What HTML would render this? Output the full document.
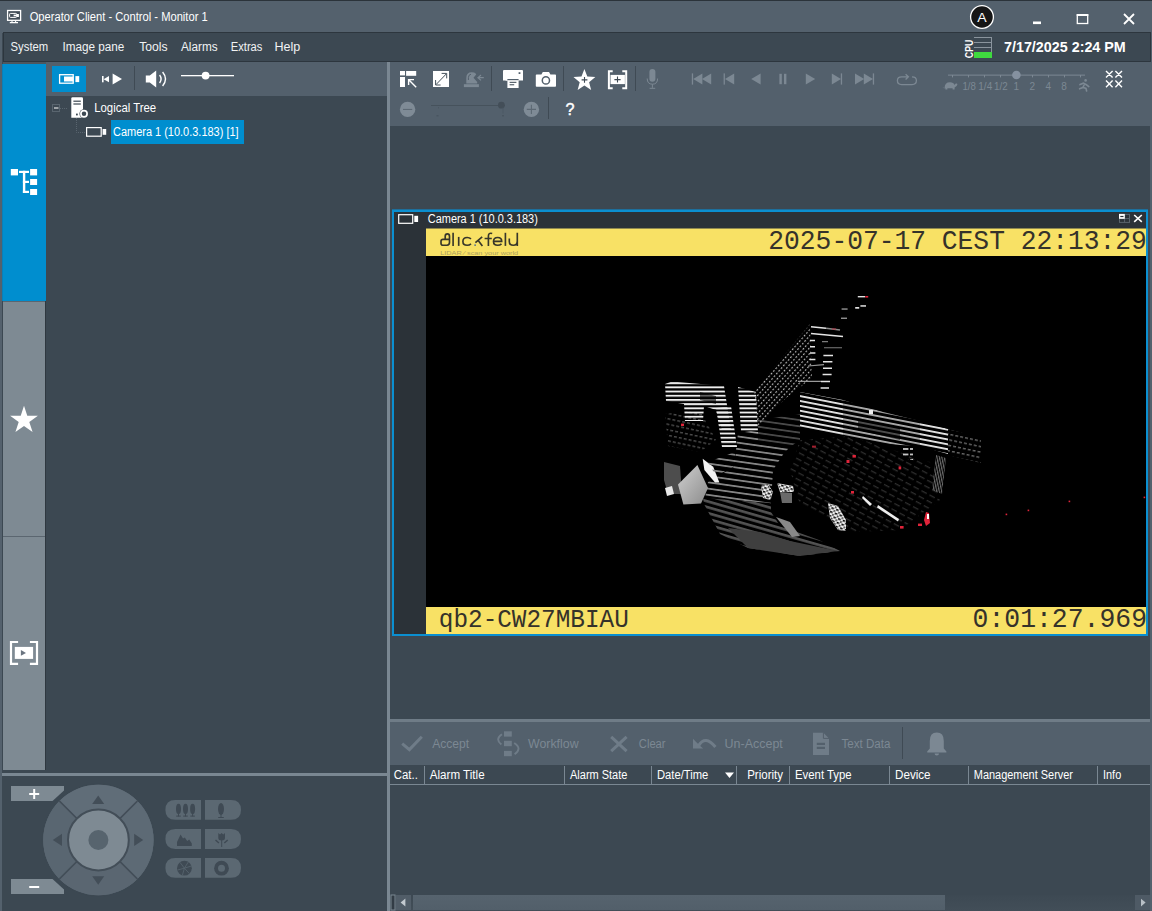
<!DOCTYPE html>
<html>
<head>
<meta charset="utf-8">
<title>Operator Client - Control - Monitor 1</title>
<style>
*{box-sizing:border-box;margin:0;padding:0}
html,body{width:1152px;height:911px;overflow:hidden;background:#3c4852;font-family:"Liberation Sans",sans-serif;}
.a{position:absolute}
#titlebar{left:0;top:0;width:1152px;height:33px;background:#54616d;border-top:1px solid #2b333a}
#edgeL{left:0;top:33px;width:2px;height:878px;background:#54616d}
#edgeR{left:1150px;top:33px;width:2px;height:878px;background:#54616d}
#menubar{left:3px;top:32px;width:1148px;height:30px;background:#3c4852;border:1px solid #2d363e}
#sidetop{left:3px;top:62px;width:43px;height:2px;background:#4d575f}
#side1{left:2px;top:64px;width:44px;height:237px;background:#008ecf;border-left:1px solid #0a7fb8}
#side2{left:3px;top:301px;width:43px;height:235px;background:#7e8a93;border-top:1px solid #5b6670}
#side3{left:3px;top:536px;width:43px;height:234px;background:#7e8a93;border-top:1px solid #5b6670}
#sideR{left:45px;top:301px;width:1px;height:469px;background:#2f3840}
#ltool{left:46px;top:62px;width:341px;height:34px;background:#53606c}
#rtool{left:390px;top:62px;width:760px;height:64px;background:#53606c}
#vsplit{left:387px;top:62px;width:3px;height:849px;background:#7a8792}
#hsplitL{left:2px;top:773px;width:385px;height:3px;background:#7a8792}
#hsplitR{left:390px;top:719px;width:760px;height:3px;background:#6f7c87}
#atool{left:390px;top:722px;width:760px;height:43px;background:#53606c}
#selbtn{left:52px;top:66px;width:34px;height:26px;background:#008ecf}
#treesel{left:111px;top:120px;width:133px;height:24px;background:#008ecf}
#pane{left:392px;top:210px;width:756px;height:426px;background:#2b3238;border:2px solid #0b8fd0}
#video{left:426px;top:229px;width:720px;height:405px;background:#000;overflow:hidden}
#ytop{left:0;top:0;width:720px;height:27px;background:#f8e165}
#ybot{left:0;top:378px;width:720px;height:27px;background:#f8e165}
#thead{left:390px;top:765px;width:760px;height:20px;background:#3c4852;border-bottom:1px solid #7a8792}
.col{position:absolute;top:766px;width:1px;height:18px;background:#7a8792}
#sbar{left:390px;top:895px;width:760px;height:16px;background:linear-gradient(#3d4953,#424e58)}
#sthumb{left:413px;top:895px;width:532px;height:15px;background:linear-gradient(#56636e,#525f6a)}
#sleft{left:396px;top:895px;width:15px;height:15px;background:#515d68}
#sright{left:1135px;top:895px;width:15px;height:15px;background:#4e5a65}
svg text{font-family:"Liberation Sans",sans-serif}
.mono{font-family:"Liberation Mono",monospace;font-size:27px;fill:#35322a}
</style>
</head>
<body>
<div class="a" id="titlebar"></div>
<div class="a" id="edgeL"></div>
<div class="a" id="edgeR"></div>
<div class="a" id="menubar"></div>
<div class="a" id="sidetop"></div>
<div class="a" id="side1"></div>
<div class="a" id="side2"></div>
<div class="a" id="side3"></div>
<div class="a" id="sideR"></div>
<div class="a" id="ltool"></div>
<div class="a" id="rtool"></div>
<div class="a" id="vsplit"></div>
<div class="a" id="hsplitL"></div>
<div class="a" id="hsplitR"></div>
<div class="a" id="atool"></div>
<div class="a" id="selbtn"></div>
<div class="a" id="treesel"></div>
<div class="a" id="thead"></div>
<div class="col" style="left:424px"></div>
<div class="col" style="left:564px"></div>
<div class="col" style="left:651px"></div>
<div class="col" style="left:736px"></div>
<div class="col" style="left:789px"></div>
<div class="col" style="left:889px"></div>
<div class="col" style="left:968px"></div>
<div class="col" style="left:1097px"></div>
<div class="a" id="sbar"></div>
<div class="a" id="sthumb"></div>
<div class="a" id="sleft"></div>
<div class="a" id="sright"></div>

<div class="a" id="pane"></div>
<div class="a" style="left:392px;top:209px;width:756px;height:1px;background:#1d6f9c"></div>
<div class="a" style="left:426px;top:228px;width:720px;height:1px;background:#8f884f"></div>
<div class="a" id="video">
<div class="a" id="ytop"></div>
<div class="a" id="ybot"></div>
<!--VIDEO-SVG-->
<svg class="a" style="left:0;top:0" width="720" height="405" viewBox="426 229 720 405">
<defs>
<pattern id="sw" width="6" height="4.2" patternUnits="userSpaceOnUse"><rect width="6" height="1.9" fill="#eeeeee"/></pattern>
<pattern id="sw2" width="6" height="4.8" patternUnits="userSpaceOnUse" patternTransform="rotate(11)"><rect width="6" height="1.8" fill="#ececec"/></pattern>
<pattern id="sd" width="3.6" height="3.9" patternUnits="userSpaceOnUse" patternTransform="rotate(-49)"><rect width="1.9" height="1.15" fill="#b4b4b4"/></pattern>
<pattern id="sdash" width="7" height="5.4" patternUnits="userSpaceOnUse"><rect width="5.4" height="1.6" fill="#dcdcdc"/></pattern>
<pattern id="sdim" width="5" height="5.4" patternUnits="userSpaceOnUse" patternTransform="rotate(12)"><rect width="3" height="1.4" fill="#8a8a8a"/></pattern>
<pattern id="sfl" width="8" height="6.2" patternUnits="userSpaceOnUse" patternTransform="rotate(8)"><rect width="8" height="1.8" fill="#858585"/></pattern>
<pattern id="sfl2" width="8" height="5.6" patternUnits="userSpaceOnUse" patternTransform="rotate(16)"><rect width="8" height="2.6" fill="#535353"/></pattern>
<pattern id="sc" width="9" height="6" patternUnits="userSpaceOnUse" patternTransform="rotate(28)"><rect width="6" height="1.3" fill="#5c5c5c"/></pattern>
<pattern id="sv" width="2.4" height="3" patternUnits="userSpaceOnUse" patternTransform="rotate(-12)"><rect width="1.2" height="3" fill="#6f6f6f"/></pattern>
<pattern id="spk" width="5" height="4" patternUnits="userSpaceOnUse" patternTransform="rotate(20)"><rect width="2.6" height="1.6" fill="#000"/><rect x="3" y="2.2" width="1.6" height="1.4" fill="#000"/></pattern>
<linearGradient id="gb" x1="0" y1="0" x2="1" y2="1"><stop offset="0" stop-color="#d0d0d0"/><stop offset="1" stop-color="#8c8c8c"/></linearGradient>
</defs>
<!-- logo -->
<g fill="none" stroke="#38372a" stroke-width="1.65" stroke-linecap="butt">
<path d="M449.4 239.4H443Q441 239.4 441 241.4V243.2Q441 245.2 443 245.2H447Q449.5 245.2 449.5 242.6V236.2Q449.5 233.8 447.4 233.8Q445.2 233.8 445.2 236.2V239.4"/>
<path d="M453.1 232.8V245.9"/>
<path d="M458.7 236.9V245.9"/>
<path d="M471 238.9Q469.4 237.5 467.2 237.5Q462.9 237.5 462.9 241.4Q462.9 245.2 467.2 245.2Q469.4 245.2 471 243.8"/>
<path d="M482.2 236.9L475.4 242.6M478.2 240.4L482.4 245.9"/>
<path d="M492.2 233.5Q488.4 232.5 488.4 236V245.9M484.6 238.5H491.8"/>
<path d="M493.8 241.3H501.7Q501.7 237.5 497.7 237.5Q493.5 237.5 493.5 241.4Q493.5 245.2 497.7 245.2Q500 245.2 501.5 243.8"/>
<path d="M505.4 232.8V245.9"/>
<path d="M509.3 238.6V241.4Q509.3 245.2 513.3 245.2Q517.2 245.2 517.2 241.4M517.3 232.8V245.9"/>
</g>
<rect x="474.4" y="244.4" width="1.4" height="1.5" fill="#3a5f9a"/>
<text x="440.2" y="254.9" font-size="4.6" fill="#ab9f5e" textLength="78" lengthAdjust="spacingAndGlyphs" font-family="Liberation Sans">LIDAR  ⁄ scan your world</text>
<!-- overlay text -->
<text class="mono" x="768.3" y="248.9" textLength="378.6" lengthAdjust="spacingAndGlyphs">2025-07-17 CEST 22:13:29</text>
<text class="mono" style="font-size:25px" x="438.8" y="626.7" textLength="190" lengthAdjust="spacingAndGlyphs">qb2-CW27MBIAU</text>
<text class="mono" x="972.6" y="626.8" textLength="174.4" lengthAdjust="spacingAndGlyphs">0:01:27.969</text>
<!--CLOUD-->
<g id="cloud">
<!-- floor -->
<polygon points="758,420 800,414 800,440 790,447 758,443" fill="url(#sfl)" opacity="0.55"/>
<polygon points="738,433 758,430 758,443 790,447 784,453 773,470 771,503 705,498 708,482 734,467" fill="url(#sfl)"/>
<polygon points="703,498 771,503 771,512 780,526 819,540 840,551 800,556 748,548 720,534 704,504" fill="url(#sfl2)"/>
<polygon points="728,528 760,532 790,541 838,551 800,556 748,548" fill="#3f3f3f"/>
<polygon points="776,517 790,522 800,536 792,537" fill="#888"/>
<!-- dim clutter left -->
<polygon points="665,414 700,410 716,440 700,452 668,446" fill="url(#sdim)" opacity="0.55"/>
<polygon points="800,440 850,436 930,462 940,500 900,530 850,532 800,505 790,470" fill="url(#sc)" opacity="0.5"/>
<!-- left wall -->
<polygon points="665,384 672,381.5 724,386 727,405 731,430 722,430 716,410 704,406 703,421 685,421 684,404 666,401" fill="url(#sw)"/>
<polygon points="716,408 731,406 737,447 722,447" fill="url(#sw)"/>
<polygon points="700,392 716,396 716,404 700,400" fill="#000" opacity="0.6"/>
<!-- B -->
<polygon points="738,387 756,392 758,433 741,431" fill="url(#sw)"/>
<!-- diagonal wall -->
<polygon points="754,391 810,324 812,378 786,398 762,422 758,428" fill="url(#sd)"/>
<!-- tower -->
<g stroke="#e4e4e4" stroke-width="1.5" fill="none">
<path d="M811 326.8L826 328.2"/><path d="M826 328.2L840 330" stroke="#8a8a8a"/>
<path d="M811 333.4L843 336.6"/>
<path d="M810 340.6H815M810 346.8H815M810 353H815.4M810 359.4H815.4"/>
<path d="M823.4 355.4H833M823 361.8H832.4M823 368.2H832M822.6 374.6H831.6M821 381.6H830M820.6 388H829"/>
</g>
<g stroke="#9a9a9a" stroke-width="1.1" fill="none">
<path d="M822 341.6H828M824 347.8H832M826 347.8H842" opacity="0.8"/>
<path d="M808 366L824 364.6M798 381.4L821 381.4"/>
</g>
<g fill="#e0e0e0">
<rect x="841.6" y="308.4" width="6" height="1.3" opacity="0.7"/><rect x="841" y="317.6" width="6" height="1.3" opacity="0.7"/>
<rect x="857.8" y="296" width="7.2" height="1.4"/><rect x="855.2" y="307" width="4" height="1.7"/><rect x="860.4" y="305.2" width="5.6" height="1.5"/>
</g>
<rect x="865.2" y="296" width="3" height="1.6" fill="#e0243a"/>
<rect x="832" y="328.4" width="4" height="1.2" fill="#b03040" opacity="0.8"/>
<!-- right wall -->
<polygon points="800,392 843,400 843,437 826,432 800,428" fill="url(#sw2)"/>
<polygon points="843,400 883,412 920,421 920,446 900,445 878,443 843,437" fill="url(#sw2)" opacity="0.75"/>
<polygon points="858,418 900,428 900,440 858,430" fill="#000" opacity="0.55"/>
<polygon points="920,421 948,429 948,454 920,446" fill="url(#sw2)"/>
<polygon points="948,429 981,438 981,463 948,455" fill="url(#sdim)" opacity="0.75"/>
<polygon points="902,445 913,447 913,460 902,458" fill="url(#sdash)"/>
<polygon points="936,455 946,458 942,494 932,490" fill="url(#sv)"/>
<!-- blobs -->
<polygon points="664,462 680,466 682,494 668,494 664,480" fill="#4d4d4d"/>
<polygon points="665,488 672,486 674,494 667,496" fill="#e8e8e8"/>
<polygon points="678,484.5 697.4,465 708,488 701,503.6 683.4,504.5" fill="url(#gb)"/>
<polygon points="702.7,458.8 713.2,466.7 719.4,482.5 715,482.5 704.4,470" fill="#f4f4f4"/>
<polygon points="708,462 735,452 735,466 716,476" fill="url(#sfl)"/>
<!-- white clusters -->
<g fill="#ededed">
<polygon points="761,486 768,484 773,492 770,500 763,498"/>
<polygon points="777,483 793,486 794,492 780,492"/>
<polygon points="828,503 838,506 846,520 846,531 838,530 830,518"/>
<polygon points="863,496 872,504 870,506 862,498"/>
<polygon points="878,505 899,519 898,521.5 877,507.5"/>
<rect x="869" y="410" width="4" height="4"/>
</g>
<g fill="url(#spk)">
<polygon points="761,486 768,484 773,492 770,500 763,498"/>
<polygon points="777,483 793,486 794,492 780,492"/>
<polygon points="828,503 838,506 846,520 846,531 838,530 830,518"/>
</g>
<polygon points="780,492 792,493 792,503 782,503" fill="#6a6a6a"/>
<!-- red -->
<g fill="#e0243a">
<rect x="846.5" y="460" width="3" height="3"/><rect x="852.5" y="455" width="3.4" height="2.6"/>
<rect x="898.6" y="466.4" width="2.6" height="3"/><rect x="851" y="491" width="3" height="2.6"/>
<polygon points="926,512 929,513 930,523 926,526 924,520"/>
<rect x="900" y="526" width="3.6" height="2.6"/><rect x="918" y="523.6" width="4" height="2.4"/>
<rect x="681" y="423.6" width="3" height="2.4"/><rect x="812" y="445.6" width="4" height="2" opacity="0.7"/>
<rect x="1005.6" y="513.6" width="1.6" height="1.6"/><rect x="1027.6" y="509.6" width="1.6" height="1.6"/><rect x="1068.6" y="500.6" width="1.6" height="1.6"/><rect x="1143.6" y="496.6" width="1.6" height="1.6"/>
</g>
<rect x="927" y="514" width="2" height="5" fill="#fff"/>
</g>

</svg>

</div>

<svg class="a" id="ov" style="left:0;top:0" width="1152" height="911" viewBox="0 0 1152 911">
<!--CHROME-->
<!-- title icon -->
<rect x="7.6" y="10.5" width="13" height="9.8" fill="#414c56" stroke="#fff" stroke-width="1.3"/>
<path d="M9.8 22.6H18M12 20.8v1.6M15.6 20.8v1.6" stroke="#fff" stroke-width="1.1" fill="none"/>
<rect x="9.6" y="13.4" width="7" height="4" rx="0.8" fill="none" stroke="#fff" stroke-width="1"/>
<rect x="13.6" y="14.6" width="3.4" height="1.7" fill="#fff"/>
<rect x="17" y="14" width="1.9" height="3" fill="#fff"/>
<text x="29.7" y="21.3" font-size="12.5" fill="#fff" textLength="178" lengthAdjust="spacingAndGlyphs">Operator Client - Control - Monitor 1</text>
<!-- user circle -->
<circle cx="982" cy="17" r="11.4" fill="#161616" stroke="#fff" stroke-width="1.3"/>
<text x="977.3" y="21.6" font-size="13" fill="#fff" textLength="9.4" lengthAdjust="spacingAndGlyphs">A</text>
<!-- window buttons -->
<rect x="1033" y="21.5" width="8" height="2.6" fill="#fff"/>
<rect x="1077.3" y="14.9" width="10.4" height="8.6" fill="none" stroke="#fff" stroke-width="1.3"/>
<rect x="1076.7" y="14" width="11.6" height="2" fill="#fff"/>
<path d="M1124 14L1134 24M1134 14L1124 24" stroke="#fff" stroke-width="1.8" fill="none"/>
<!-- menu -->
<g font-size="12.5" fill="#f1f3f4">
<text x="10.6" y="51.2" textLength="37.6" lengthAdjust="spacingAndGlyphs">System</text>
<text x="62.4" y="51.2" textLength="62" lengthAdjust="spacingAndGlyphs">Image pane</text>
<text x="139.2" y="51.2" textLength="28.4" lengthAdjust="spacingAndGlyphs">Tools</text>
<text x="181" y="51.2" textLength="36.6" lengthAdjust="spacingAndGlyphs">Alarms</text>
<text x="230.8" y="51.2" textLength="31.6" lengthAdjust="spacingAndGlyphs">Extras</text>
<text x="274.4" y="51.2" textLength="25.8" lengthAdjust="spacingAndGlyphs">Help</text>
</g>
<!-- CPU -->
<text transform="translate(972.6,58.2) rotate(-90)" font-size="10.5" font-weight="bold" fill="#fff" textLength="18.6" lengthAdjust="spacingAndGlyphs">CPU</text>
<g stroke="#8a949d" stroke-width="1" shape-rendering="crispEdges">
<path d="M974 37.5H992M974 42.5H992M974 47.5H992M974 52.5H992M991.5 37V58"/>
</g>
<rect x="974" y="52" width="18" height="6" fill="#3fd93f" shape-rendering="crispEdges"/>
<text x="1004" y="52" font-size="14" font-weight="bold" fill="#fff" textLength="121.8" lengthAdjust="spacingAndGlyphs">7/17/2025 2:24 PM</text>
<!-- sidebar: tree icon -->
<g fill="#fff">
<rect x="10.8" y="169" width="7.2" height="6.4"/>
<rect x="30.1" y="169" width="7" height="6.4"/>
<rect x="30.1" y="179" width="7" height="6"/>
<rect x="30.1" y="189" width="7" height="6"/>
<rect x="19" y="170.8" width="10" height="2.2"/>
<rect x="22.9" y="170.8" width="2.4" height="22.2"/>
<rect x="22.9" y="180.8" width="6.1" height="2.2"/>
<rect x="22.9" y="190.8" width="6.1" height="2.2"/>
</g>
<!-- sidebar: star -->
<path d="M24.00 405.70L27.28 415.79L37.89 415.79L29.30 422.02L32.58 432.11L24.00 425.88L15.42 432.11L18.70 422.02L10.11 415.79L20.72 415.79Z" fill="#fff"/>
<!-- sidebar: bracket play -->
<g fill="none" stroke="#fff" stroke-width="2.2">
<path d="M18.1 642H11V663.9H18.1M29.9 642H37V663.9H29.9"/>
</g>
<rect x="14.8" y="646.9" width="18.3" height="12" fill="#fff"/>
<path d="M20.9 650L26 652.9L20.9 655.8Z" fill="#6b7580"/>
<!-- left toolbar -->
<rect x="59.6" y="74.7" width="13.6" height="8.5" fill="none" stroke="#fff" stroke-width="1.3"/>
<rect x="64" y="76.5" width="9.5" height="5" fill="#fff"/>
<rect x="75.4" y="76.1" width="3.8" height="6" fill="#fff"/>
<g fill="#fff">
<rect x="102" y="76" width="1.6" height="6.3"/>
<path d="M109 76V82.3L103.6 79.15Z"/>
<path d="M112.6 73.6L122 79L112.6 84.4Z"/>
</g>
<rect x="134" y="66" width="1" height="24" fill="#3f4a54"/>
<path d="M145.8 75.6H149.8L156.2 70.4V87.6L149.8 82.6H145.8Z" fill="#fff"/>
<path d="M159.6 75Q162.6 79 159.6 83M162.6 72Q168.4 79 162.6 86" fill="none" stroke="#fff" stroke-width="1.4"/>
<rect x="181" y="75" width="53" height="1.3" fill="#fff"/>
<circle cx="205.6" cy="75.6" r="3.9" fill="#fff"/>
<!-- tree -->
<rect x="52.5" y="104.5" width="7" height="7" fill="none" stroke="#59656f" stroke-width="1"/>
<rect x="54" y="107.5" width="4.5" height="1" fill="#fff"/>
<path d="M60 108.5H68" stroke="#59656f" stroke-width="1" stroke-dasharray="1 1"/>
<path d="M76.5 118V132.5H85" stroke="#59656f" stroke-width="1" stroke-dasharray="1 1" fill="none"/>
<!-- server icon -->
<path d="M72.5 97.3H81.8Q83 97.3 83 98.5V117.7H71.3V98.5Q71.3 97.3 72.5 97.3Z" fill="#fff"/>
<rect x="73.4" y="100.6" width="7.4" height="1.2" fill="#3c4852"/>
<rect x="73.4" y="103.4" width="7.4" height="1.2" fill="#3c4852"/>
<rect x="76" y="113.6" width="1.8" height="1.8" fill="#3c4852"/>
<circle cx="84" cy="113.8" r="4.6" fill="#3c4852"/>
<circle cx="84" cy="113.8" r="3.1" fill="none" stroke="#fff" stroke-width="1.7"/>
<text x="94.2" y="112" font-size="12.5" fill="#fff" textLength="62" lengthAdjust="spacingAndGlyphs">Logical Tree</text>
<rect x="86.6" y="127.6" width="14.6" height="8.6" fill="none" stroke="#fff" stroke-width="1.2"/>
<rect x="102.6" y="129" width="3.6" height="5.8" fill="#fff"/>
<text x="113" y="136" font-size="12.5" fill="#fff" textLength="125.6" lengthAdjust="spacingAndGlyphs">Camera 1 (10.0.3.183) [1]</text>

<!--TOOLBAR-->
<!-- icon1 layout+arrow -->
<g fill="#fff">
<rect x="400" y="71" width="5" height="4.4"/>
<rect x="400" y="77" width="5" height="10"/>
<rect x="406.1" y="71" width="10.1" height="4.8"/>
</g>
<path d="M416.2 87.2L409 80M408.6 85V79.6H414" fill="none" stroke="#fff" stroke-width="1.4"/>
<!-- icon2 expand -->
<rect x="433" y="71" width="16" height="16" fill="#fff" shape-rendering="crispEdges"/>
<path d="M436 84.6L446.4 73.8M435.6 80V85H440.6M441.6 73.4H446.7V78.4" fill="none" stroke="#46525c" stroke-width="1"/>
<!-- icon3 alarm disabled -->
<g fill="#7c8893">
<path d="M466.3 83.5V78Q466.3 72.2 471.8 72.2Q477.2 72.2 477.2 78V83.5Z"/>
<rect x="463.9" y="84.2" width="15" height="2.9"/>
</g>
<path d="M478.2 74.2L475.2 77.7L478.2 81.2" fill="none" stroke="#53606c" stroke-width="2.6"/>
<path d="M483.8 77.7H478.2M481 75L478 77.7L481 80.4" fill="none" stroke="#7c8893" stroke-width="1.2"/>
<path d="M468.4 80V77.6Q468.4 74.6 471 74.2" fill="none" stroke="#53606c" stroke-width="1"/>
<rect x="491" y="66" width="1" height="25" fill="#3f4a54"/>
<!-- printer -->
<g fill="#fff">
<path d="M504 70H522Q523 70 523 71V80.6H503V71Q503 70 504 70Z"/>
<rect x="507.4" y="78.6" width="11.2" height="9.4"/>
</g>
<rect x="518.6" y="72.2" width="1.8" height="1.8" fill="#53606c"/>
<rect x="505.6" y="78.6" width="1.8" height="2" fill="#fff"/>
<rect x="509.6" y="81.8" width="6.8" height="1.1" fill="#4a5660"/>
<rect x="509.6" y="84.2" width="4.6" height="1.1" fill="#4a5660"/>
<rect x="507.4" y="79" width="11.2" height="1.2" fill="#53606c"/>
<!-- camera -->
<path d="M536.6 74.4H541.4L542.8 72H549L550.4 74.4H555.2Q556 74.4 556 75.2V86Q556 86.8 555.2 86.8H536.6Q535.8 86.8 535.8 86V75.2Q535.8 74.4 536.6 74.4Z" fill="#fff"/>
<circle cx="545.9" cy="80.4" r="3.6" fill="none" stroke="#53606c" stroke-width="1.5"/>
<rect x="563" y="66" width="1" height="25" fill="#3f4a54"/>
<!-- star + -->
<path d="M584.40 69.10L587.31 76.60L595.34 77.05L589.10 82.13L591.16 89.90L584.40 85.54L577.64 89.90L579.70 82.13L573.46 77.05L581.49 76.60Z" fill="#fff"/>
<path d="M581.6 79.9H587.4M584.5 77V82.8" stroke="#3f4a54" stroke-width="1.1" fill="none"/>
<!-- bracket + -->
<path d="M612.7 71.2H608.9V88.2H612.7M622.3 71.2H626.2V88.2H622.3" fill="none" stroke="#fff" stroke-width="2"/>
<rect x="610.5" y="74.9" width="14.4" height="9.2" fill="#fff"/>
<path d="M614.4 79.6H620.6M617.5 76.6V82.6" stroke="#3f4a54" stroke-width="1.1" fill="none"/>
<rect x="635" y="66" width="1" height="25" fill="#3f4a54"/>
<!-- mic disabled -->
<g fill="#7c8893">
<rect x="649.4" y="69" width="6" height="12.8" rx="3"/>
<path d="M647.2 78.5Q647.2 84.2 652.4 84.2Q657.6 84.2 657.6 78.5" fill="none" stroke="#7c8893" stroke-width="1"/>
<rect x="651.9" y="84.2" width="1" height="3.6"/>
<rect x="649.6" y="87.8" width="5.6" height="1"/>
</g>
<!-- playback disabled -->
<g fill="#7c8893">
<rect x="691.8" y="73.4" width="1.3" height="11.2"/>
<path d="M702.4 73.6V84.4L693.2 79Z"/><path d="M711.2 73.6V84.4L702 79Z"/>
<rect x="723.6" y="73.4" width="1.3" height="11.2"/>
<path d="M734.2 73.6V84.4L725 79Z"/>
<path d="M760.6 73.6V84.4L751.2 79Z"/>
<rect x="779.4" y="73.8" width="2.4" height="10.4"/><rect x="784" y="73.8" width="2.4" height="10.4"/>
<path d="M805.8 73.6V84.4L815.2 79Z"/>
<path d="M831.8 73.6V84.4L841 79Z"/><rect x="840.8" y="73.4" width="1.3" height="11.2"/>
<path d="M855 73.6V84.4L864.2 79Z"/><path d="M863.8 73.6V84.4L873 79Z"/><rect x="872.8" y="73.4" width="1.3" height="11.2"/>
</g>
<path d="M912 76.8Q916.4 76.8 916.4 80.6Q916.4 84.6 912 84.6H901.6Q897.4 84.6 897.4 80.6Q897.4 76.8 901.6 76.8H908M905.6 74.2L908.4 76.8L905.6 79.4" fill="none" stroke="#7c8893" stroke-width="1.3"/>
<!-- speed slider -->
<g fill="#7c8893">
<rect x="948" y="74.6" width="137" height="1"/>
<rect x="952" y="75" width="1" height="2.4"/><rect x="968" y="75" width="1" height="2.4"/><rect x="984" y="75" width="1" height="2.4"/><rect x="1000" y="75" width="1" height="2.4"/><rect x="1016" y="75" width="1" height="2.4"/><rect x="1032" y="75" width="1" height="2.4"/><rect x="1048" y="75" width="1" height="2.4"/><rect x="1064" y="75" width="1" height="2.4"/><rect x="1080" y="75" width="1" height="2.4"/>
</g>
<circle cx="1016.4" cy="75" r="4.3" fill="#8591a0"/>
<!-- turtle -->
<g fill="#7c8893">
<path d="M944.6 88Q944.6 82.2 950 82.2Q953.6 82.2 954.6 85Q955.4 83.2 957 83.6Q958 84.6 956.6 86Q955.6 87 954.6 87.4V89.6H952.6V88.2H947.4V89.6H945.4V88.2Q943 88.6 942.6 87.6Z"/>
</g>
<g font-size="10" fill="#7c8893">
<text x="962.4" y="90.4" textLength="13.4" lengthAdjust="spacingAndGlyphs">1/8</text>
<text x="978.3" y="90.4" textLength="13.9" lengthAdjust="spacingAndGlyphs">1/4</text>
<text x="994.1" y="90.4" textLength="13.6" lengthAdjust="spacingAndGlyphs">1/2</text>
<text x="1013.6" y="90.4">1</text>
<text x="1029.6" y="90.4">2</text>
<text x="1045.4" y="90.4">4</text>
<text x="1061.3" y="90.4">8</text>
</g>
<!-- runner -->
<g fill="none" stroke="#7c8893" stroke-width="1.6" stroke-linecap="round">
<circle cx="1085.6" cy="80.4" r="1.3" fill="#7c8893" stroke="none"/>
<path d="M1080 84.6L1083.4 83.2L1086.4 84.8L1088.8 86.6M1084.6 84L1082.8 87.6L1079.6 88.8M1083.4 87.4L1086 88.4L1086.6 91"/>
</g>
<!-- XX XX -->
<path d="M1106 71L1112.6 77.6M1112.6 71L1106 77.6M1115.4 71L1122 77.6M1122 71L1115.4 77.6M1106 80.6L1112.6 87.2M1112.6 80.6L1106 87.2M1115.4 80.6L1122 87.2M1122 80.6L1115.4 87.2" stroke="#fff" stroke-width="1.4" fill="none"/>
<!-- zoom row -->
<circle cx="407.6" cy="109.4" r="7.7" fill="#7f8b96"/>
<rect x="403" y="108.9" width="9.2" height="1.1" fill="#5d6974"/>
<rect x="431" y="105" width="74" height="1" fill="#46525c"/>
<circle cx="501.4" cy="105.2" r="3.4" fill="#434e58"/>
<rect x="436.5" y="115" width="2" height="1.4" fill="#495560"/><rect x="502" y="115" width="2" height="1.4" fill="#495560"/>
<rect x="438" y="107" width="1" height="1.4" fill="#4b5762"/><rect x="502.5" y="107.6" width="1" height="6" fill="#4d5964"/>
<circle cx="531.4" cy="109.4" r="7.7" fill="#7f8b96"/>
<path d="M526.8 109.4H536M531.4 104.8V114" stroke="#5d6974" stroke-width="1.1" fill="none"/>
<rect x="548" y="97" width="1" height="22" fill="#3f4a54"/>
<text x="565.4" y="115" font-size="16.5" fill="#fff" stroke="#fff" stroke-width="0.45" textLength="9" lengthAdjust="spacingAndGlyphs">?</text>

<!--PANEHDR-->
<rect x="398.7" y="214.7" width="14" height="8.6" fill="none" stroke="#fff" stroke-width="1.2"/>
<rect x="414.3" y="215.8" width="3.8" height="6.2" fill="#fff"/>
<text x="427.8" y="222.8" font-size="12.5" fill="#fff" textLength="110" lengthAdjust="spacingAndGlyphs">Camera 1 (10.0.3.183)</text>
<!-- pane buttons -->
<rect x="1119.5" y="214.4" width="10" height="8" fill="none" stroke="#59636c" stroke-width="1"/>
<path d="M1124.6 214.4V222.4M1119.5 218.6H1129.5" stroke="#59636c" stroke-width="1" fill="none"/>
<rect x="1119" y="213.9" width="5.8" height="4.9" fill="#fff"/>
<rect x="1120.3" y="215.9" width="3.2" height="1.2" fill="#2b3238"/>
<path d="M1134.2 215L1141.8 221.8M1141.8 215L1134.2 221.8" stroke="#fff" stroke-width="1.6" fill="none"/>
<!--ALARM-->
<!-- alarm toolbar (disabled) -->
<path d="M402.2 743.6L409.4 749.6L421.8 736.8" fill="none" stroke="#6f7c88" stroke-width="3"/>
<g font-size="12.5" fill="#7c8893">
<text x="432.2" y="748.2" textLength="37" lengthAdjust="spacingAndGlyphs">Accept</text>
<text x="528" y="748.2" textLength="50.6" lengthAdjust="spacingAndGlyphs">Workflow</text>
<text x="638.8" y="748.2" textLength="26.8" lengthAdjust="spacingAndGlyphs">Clear</text>
<text x="724.6" y="748.2" textLength="58.2" lengthAdjust="spacingAndGlyphs">Un-Accept</text>
<text x="841.4" y="748.2" textLength="49" lengthAdjust="spacingAndGlyphs">Text Data</text>
</g>
<!-- workflow icon -->
<g fill="#6f7c88">
<rect x="504" y="731.3" width="7.8" height="5.3"/>
<rect x="504" y="740.8" width="7.8" height="5.4"/>
<rect x="504" y="750.9" width="7.8" height="5.3"/>
</g>
<path d="M502 734.2Q494.6 739 501.4 744.6M514.2 743Q522.6 748.4 514.6 754.2" fill="none" stroke="#6f7c88" stroke-width="1.9"/>
<!-- clear X -->
<path d="M611.2 736.8L626.6 751.2M626.6 736.8L611.2 751.2" stroke="#6f7c88" stroke-width="3" fill="none"/>
<!-- un-accept -->
<path d="M698.6 745.6Q705.4 734.6 715.4 747" fill="none" stroke="#6f7c88" stroke-width="3"/>
<path d="M693 738.8V748.4H703.2L699.6 745.4L696.6 742.4Z" fill="#6f7c88"/>
<!-- doc -->
<path d="M813 732.8H823.4L829 738.4V755H813Z" fill="#6f7c88"/>
<path d="M823.4 732.8V738.4H829" fill="none" stroke="#53606c" stroke-width="1"/>
<rect x="816.8" y="742.8" width="8.2" height="2.2" fill="#53606c"/><rect x="816.8" y="746.8" width="8.2" height="2.2" fill="#53606c"/>
<rect x="902" y="727" width="1" height="32" fill="#3f4a54"/>
<!-- bell -->
<path d="M936.8 732.6Q943.8 732.6 943.8 741V748.6L946.4 751.4V752.4H927.2V751.4L929.8 748.6V741Q929.8 732.6 936.8 732.6Z" fill="#7c8893"/>
<path d="M934.6 753.4H939Q939 755.4 936.8 755.4Q934.6 755.4 934.6 753.4Z" fill="#7c8893"/>
<!-- header text -->
<g font-size="12.5" fill="#fff">
<text x="393.8" y="779.3" textLength="24" lengthAdjust="spacingAndGlyphs">Cat..</text>
<text x="429.8" y="779.3" textLength="54.8" lengthAdjust="spacingAndGlyphs">Alarm Title</text>
<text x="570" y="779.3" textLength="57.4" lengthAdjust="spacingAndGlyphs">Alarm State</text>
<text x="657" y="779.3" textLength="51.2" lengthAdjust="spacingAndGlyphs">Date/Time</text>
<text x="747.2" y="779.3" textLength="35.8" lengthAdjust="spacingAndGlyphs">Priority</text>
<text x="795" y="779.3" textLength="56.6" lengthAdjust="spacingAndGlyphs">Event Type</text>
<text x="895" y="779.3" textLength="35.6" lengthAdjust="spacingAndGlyphs">Device</text>
<text x="973.8" y="779.3" textLength="99.2" lengthAdjust="spacingAndGlyphs">Management Server</text>
<text x="1103" y="779.3" textLength="18.2" lengthAdjust="spacingAndGlyphs">Info</text>
</g>
<path d="M725 772.4H734L729.5 778Z" fill="#fff"/>
<!-- scrollbar arrows -->
<path d="M405.4 898.6V906.6L400.6 902.6Z" fill="#c3cad0"/>
<path d="M1141 898.8V906.4L1145.6 902.6Z" fill="#b8c0c7"/>
<rect x="391" y="895" width="4" height="15" fill="#323c45" stroke="#7a8792" stroke-width="1"/>

<!--PTZ-->
<!-- PTZ -->
<path d="M11 786H64V790.5L52.5 801H11Z" fill="#7e8a93"/>
<path d="M29.2 794H39.2M34.2 789V799" stroke="#fff" stroke-width="2" fill="none"/>
<path d="M11 879H52.5L64 889.5V894H11Z" fill="#7e8a93"/>
<rect x="29.2" y="886" width="10" height="2" fill="#fff"/>
<defs><clipPath id="dp"><circle cx="98.4" cy="840" r="55.2"/></clipPath></defs>
<circle cx="98.4" cy="840" r="56.6" fill="#3c4852"/>
<circle cx="98.4" cy="840" r="55.2" fill="#5c6974"/>
<g clip-path="url(#dp)">
<path d="M98.4 840L42 783.6H155Z" fill="#606d78"/>
<path d="M98.4 840L155 783.6V896.4Z" fill="#5d6a75"/>
<path d="M98.4 840L155 896.4H42Z" fill="#5a6671"/>
<path d="M98.4 840L42 896.4V783.6Z" fill="#596671"/>
<path d="M58 799.6L138.8 880.4M138.8 799.6L58 880.4" stroke="#434e58" stroke-width="1.5" fill="none"/>
</g>
<circle cx="98.4" cy="840" r="30.4" fill="#7e8a93" stroke="#434e58" stroke-width="2"/>
<circle cx="98.4" cy="840" r="10" fill="#57646e"/>
<g fill="#434e58">
<path d="M98.2 795.4L104.2 804H92.2Z"/>
<path d="M98.2 884.8L104.2 876.2H92.2Z"/>
<path d="M52.8 840L62 833.8V846Z"/>
<path d="M143.2 840L134.2 833.8V846Z"/>
</g>
<!-- focus/iris buttons -->
<g fill="#5b6872">
<path d="M175.4 800H201V819.8H175.4Q165.4 819.8 165.4 809.9Q165.4 800 175.4 800Z"/>
<path d="M205 800H231Q241 800 241 809.9Q241 819.8 231 819.8H205Z"/>
<path d="M175.4 829H201V848.9H175.4Q165.4 848.9 165.4 839Q165.4 829 175.4 829Z"/>
<path d="M205 829H231Q241 829 241 839Q241 848.9 231 848.9H205Z"/>
<path d="M175.4 858H201V877.8H175.4Q165.4 877.8 165.4 867.9Q165.4 858 175.4 858Z"/>
<path d="M205 858H231Q241 858 241 867.9Q241 877.8 231 877.8H205Z"/>
</g>
<g fill="#3f4a54">
<ellipse cx="178.5" cy="809" rx="2.5" ry="5.2"/><ellipse cx="185.5" cy="809" rx="2.5" ry="5.2"/><ellipse cx="192.6" cy="809" rx="2.5" ry="5.2"/>
<rect x="178" y="812" width="1" height="4.4"/><rect x="185" y="812" width="1" height="4.4"/><rect x="192.1" y="812" width="1" height="4.4"/>
<rect x="176.2" y="815.6" width="4.6" height="1"/><rect x="183.2" y="815.6" width="4.6" height="1"/><rect x="190.3" y="815.6" width="4.6" height="1"/>
<ellipse cx="221" cy="809" rx="3" ry="6"/><rect x="220.5" y="812" width="1" height="5.6"/><rect x="218.2" y="817" width="5.6" height="1"/>
<path d="M177 845.9V842L180.6 834.4L183 838.6L184.8 837.4L187.2 841L189.2 839.4L191.8 843.4V845.9Z"/>
<path d="M218.3 833L220 834.6L221.6 833L223.3 834.6L225 833V838Q225 840.5 221.6 840.5Q218.3 840.5 218.3 838Z"/>
<rect x="221.2" y="840" width="1" height="7"/>
<path d="M215 840.4L216 839.6L219.4 842.6L218.4 843.6ZM228.2 840.4L227.2 839.6L223.8 842.6L224.8 843.6Z"/>
<circle cx="184.4" cy="868.2" r="7.4"/>
<circle cx="221.5" cy="868.2" r="7.4"/>
</g>
<g fill="none" stroke="#56636d" stroke-width="0.9">
<path d="M184.4 868.2L180 862.4M184.4 868.2L191.4 866M184.4 868.2L182.4 875.2M184.4 868.2L188.4 861.8M184.4 868.2L177.6 870M184.4 868.2L189.4 873.6"/>
</g>
<circle cx="221.5" cy="868.2" r="3.5" fill="#5b6872"/>
</svg>
</body>
</html>
